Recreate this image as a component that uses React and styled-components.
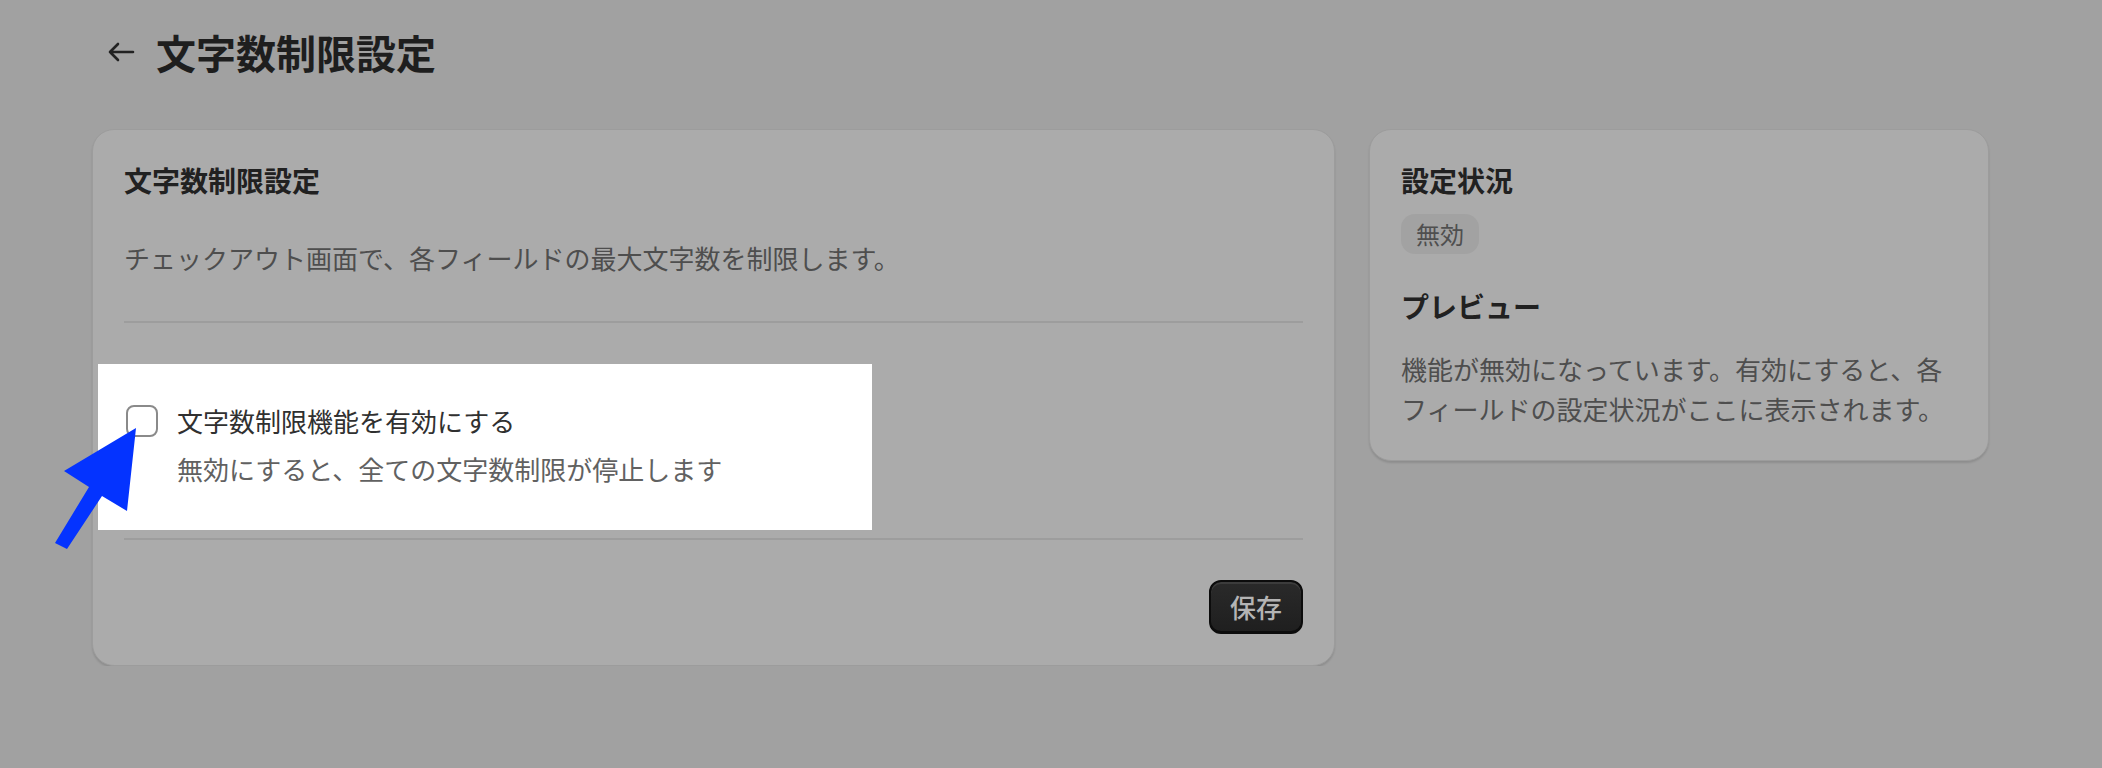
import styled, { createGlobalStyle } from "styled-components";

const GlobalStyle = createGlobalStyle`
  body {
    margin: 0;
    background: #a1a1a1;
    font-family: "Noto Sans CJK JP", "Noto Sans", sans-serif;
    color: #1f1f1f;
  }
`;

const Page = styled.div`
  position: relative;
  width: 1897px;
  padding: 24px 0 0 92px;
`;

const TitleRow = styled.div`
  display: flex;
  align-items: center;
  gap: 21px;
  padding-left: 15px;
  height: 56px;
`;

const Title = styled.h1`
  margin: 0;
  font-size: 40px;
  line-height: 56px;
  font-weight: 700;
  color: #1e1e1e;
`;

const Columns = styled.div`
  display: grid;
  grid-template-columns: 1243px 620px;
  gap: 34px;
  align-items: start;
  margin-top: 49px;
`;

const Card = styled.section`
  background: #ababab;
  border: 1px solid #9c9c9c;
  border-radius: 22px;
  box-shadow: 0 2px 2px rgba(0, 0, 0, 0.12);
  padding: 30px 31px 31px;
  display: flex;
  flex-direction: column;
`;

const CardHeading = styled.h2`
  margin: ${(p) => p.$top || 0}px 0 0;
  font-size: 28px;
  line-height: 40px;
  font-weight: 700;
  color: #212121;
`;

const Text = styled.p`
  margin: ${(p) => p.$top || 0}px 0 0;
  font-size: 26px;
  line-height: ${(p) => p.$lh || 40}px;
  color: #4e4e4e;
`;

const Divider = styled.hr`
  margin: ${(p) => p.$top}px 0 0;
  border: none;
  height: 2px;
  background: #9d9d9d;
`;

const Spotlight = styled.div`
  margin: 41px 0 0 -26px;
  width: 774px;
  box-sizing: border-box;
  background: #ffffff;
  padding: 37px 28px 41px;
  display: flex;
  gap: 19px;
`;

const Checkbox = styled.span`
  flex: none;
  width: 32px;
  height: 32px;
  margin-top: 4px;
  box-sizing: border-box;
  border: 2px solid #8a8a8a;
  border-radius: 8px;
  background: #fff;
`;

const CheckText = styled.div`
  display: flex;
  flex-direction: column;
  gap: 8px;
`;

const Label = styled.span`
  font-size: 26px;
  line-height: 40px;
  color: ${(p) => (p.$muted ? "#616161" : "#303030")};
`;

const Footer = styled.div`
  display: flex;
  justify-content: flex-end;
  margin-top: 40px;
`;

const SaveButton = styled.button`
  width: 94px;
  height: 54px;
  border-radius: 12px;
  border: 2px solid #0c0c0c;
  border-bottom-width: 3px;
  background: linear-gradient(#2a2a2a, #1f1f1f);
  box-shadow: inset 0 2px 0 #3c3c3c;
  color: #b4b4b4;
  font-family: inherit;
  font-size: 26px;
  font-weight: 500;
  padding: 0;
`;

const Badge = styled.span`
  align-self: flex-start;
  margin-top: 14px;
  height: 40px;
  line-height: 40px;
  padding: 0 15px;
  border-radius: 14px;
  background: #a2a2a2;
  font-size: 24px;
  color: #4f4f4f;
`;

const Pointer = styled.svg`
  position: absolute;
  left: 50px;
  top: 420px;
`;

const BackArrow = () => (
  <svg width="28" height="20" viewBox="0 0 28 20" fill="none">
    <path
      d="M26 10H3M11 2L3 10L11 18"
      stroke="#222"
      strokeWidth="2.6"
      strokeLinecap="round"
      strokeLinejoin="round"
    />
  </svg>
);

export default function App() {
  return (
    <Page>
      <GlobalStyle />
      <TitleRow>
        <BackArrow />
        <Title>文字数制限設定</Title>
      </TitleRow>
      <Columns>
        <Card>
          <CardHeading>文字数制限設定</CardHeading>
          <Text $top={38}>
            チェックアウト画面で、各フィールドの最大文字数を制限します。
          </Text>
          <Divider $top={43} />
          <Spotlight>
            <Checkbox />
            <CheckText>
              <Label>文字数制限機能を有効にする</Label>
              <Label $muted>無効にすると、全ての文字数制限が停止します</Label>
            </CheckText>
          </Spotlight>
          <Divider $top={8} />
          <Footer>
            <SaveButton>保存</SaveButton>
          </Footer>
        </Card>
        <Card>
          <CardHeading>設定状況</CardHeading>
          <Badge>無効</Badge>
          <CardHeading $top={32}>プレビュー</CardHeading>
          <Text $top={23} $lh={40}>
            機能が無効になっています。有効にすると、各フィールドの設定状況がここに表示されます。
          </Text>
        </Card>
      </Columns>
      <Pointer width="100" height="140" viewBox="0 0 100 140">
        <polygon
          points="86,8 14,51 39,67 5,123 17,129 52,76 77,91"
          fill="#0433ff"
        />
      </Pointer>
    </Page>
  );
}
